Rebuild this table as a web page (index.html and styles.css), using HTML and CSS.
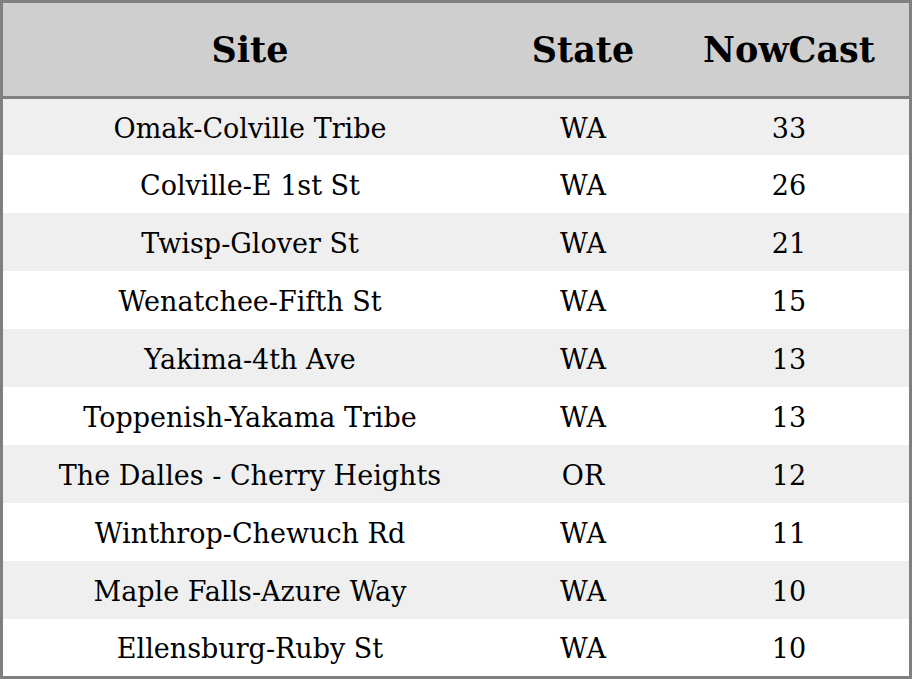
FILE: index.html
```html
<!DOCTYPE html>
<html>
<head>
<meta charset="utf-8">
<link rel="stylesheet" href="styles.css">
</head>
<body>
<table class="aq">
  <thead>
    <tr><th class="c-site">Site</th><th class="c-state">State</th><th class="c-now">NowCast</th></tr>
  </thead>
  <tbody>
    <tr class="first"><td>Omak-Colville Tribe</td><td>WA</td><td>33</td></tr>
    <tr><td>Colville-E 1st St</td><td>WA</td><td>26</td></tr>
    <tr><td>Twisp-Glover St</td><td>WA</td><td>21</td></tr>
    <tr><td>Wenatchee-Fifth St</td><td>WA</td><td>15</td></tr>
    <tr><td>Yakima-4th Ave</td><td>WA</td><td>13</td></tr>
    <tr><td>Toppenish-Yakama Tribe</td><td>WA</td><td>13</td></tr>
    <tr><td>The Dalles - Cherry Heights</td><td>OR</td><td>12</td></tr>
    <tr><td>Winthrop-Chewuch Rd</td><td>WA</td><td>11</td></tr>
    <tr><td>Maple Falls-Azure Way</td><td>WA</td><td>10</td></tr>
    <tr class="last"><td>Ellensburg-Ruby St</td><td>WA</td><td>10</td></tr>
  </tbody>
</table>
</body>
</html>
```
FILE: styles.css
```css
html, body {
  margin: 0;
  padding: 0;
  background: #ffffff;
}
.aq {
  width: 912px;
  border-collapse: collapse;
  border: 3px solid #808080;
  font-family: "DejaVu Serif", serif;
  color: #000;
  table-layout: fixed;
}
.aq th {
  background: #cfcfcf;
  height: 93px;
  padding: 0;
  font-size: 35px;
  font-weight: bold;
  text-align: center;
  border-bottom: 3px solid #808080;
}
.c-site { width: 494px; }
.c-state { width: 172px; }
.c-now { width: 240px; }
.aq td {
  height: 56px;
  padding: 2px 0 0 0;
  font-size: 27px;
  text-align: center;
}
.aq tr.first td { height: 54px; }
.aq tr.last td { height: 55px; }
.aq tbody tr:nth-child(odd) td { background: #efefef; }
.aq tbody tr:nth-child(even) td { background: #ffffff; }
```
